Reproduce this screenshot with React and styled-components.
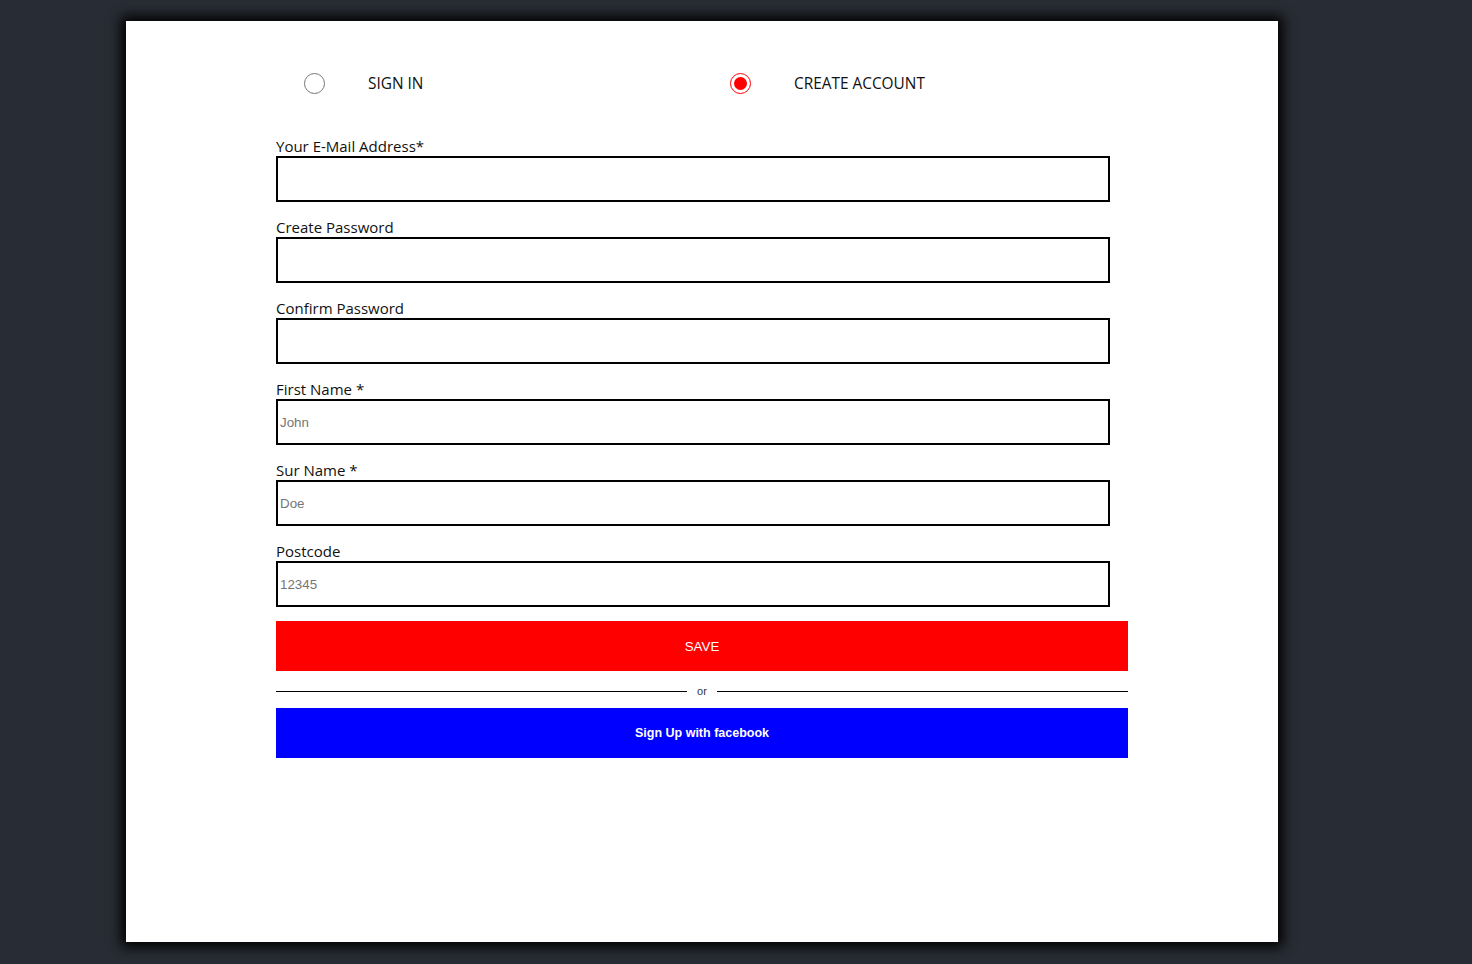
import React from 'react';
import styled, { createGlobalStyle } from 'styled-components';

const GlobalStyle = createGlobalStyle`
  html, body {
    margin: 0;
    padding: 0;
    background-color: #282c34;
  }
  body {
    font-family: "Open Sans", "Noto Sans", sans-serif;
  }
  * {
    box-sizing: border-box;
  }
`;

const Page = styled.div`
  min-height: 964px;
  padding: 21px 0 22px 126px;
`;

const Card = styled.div`
  width: 1152px;
  height: 921px;
  background: #fff;
  box-shadow: 0 0 12px 5px #000;
  padding: 52px 150px 0;
`;

const Form = styled.form`
  width: 852px;
  display: flex;
  flex-direction: column;
`;

const ModeRow = styled.div`
  display: grid;
  grid-template-columns: 1fr 1fr;
  margin-bottom: 43px;
`;

const ModeOption = styled.label`
  display: flex;
  align-items: center;
  gap: 43px;
  padding-left: 28px;
  height: 21px;
  font-size: 15.4px;
  line-height: 21px;
  color: #111;
  cursor: pointer;
`;

const Radio = styled.span`
  position: relative;
  width: 21px;
  height: 21px;
  border-radius: 50%;
  border: ${(p) => (p.$checked ? '1.5px solid #f00' : '1px solid #767676')};
  background: #fff;
  flex-shrink: 0;

  &::after {
    content: '';
    display: ${(p) => (p.$checked ? 'block' : 'none')};
    position: absolute;
    inset: 3px;
    border-radius: 50%;
    background: #f00;
  }
`;

const FieldList = styled.div`
  display: flex;
  flex-direction: column;
  gap: 16px;
  margin-bottom: 14px;
`;

const Field = styled.div`
  display: flex;
  flex-direction: column;
`;

const Label = styled.label`
  font-size: 15px;
  line-height: 19px;
  color: #111;
`;

const Input = styled.input`
  width: 834px;
  height: 46px;
  border: 2px solid #000;
  padding: 0 2px;
  font-family: "Liberation Sans", Arial, sans-serif;
  font-size: 13.33px;
  outline: none;

  &::placeholder {
    color: #757575;
  }
`;

const Button = styled.button`
  width: 100%;
  height: 50px;
  border: none;
  background: ${(p) => p.$bg};
  color: #fff;
  font-family: "Liberation Sans", Arial, sans-serif;
  font-size: ${(p) => (p.$bold ? '12.5px' : '13.33px')};
  font-weight: ${(p) => (p.$bold ? 700 : 400)};
  cursor: pointer;
`;

const Divider = styled.div`
  display: flex;
  align-items: center;
  gap: 10px;
  height: 14px;
  margin: 13px 0 10px;
  font-family: "Liberation Sans", Arial, sans-serif;
  font-size: 11px;
  color: #333;

  &::before,
  &::after {
    content: '';
    flex: 1;
    height: 1px;
    background: #000;
  }
`;

const fields = [
  { id: 'email', label: 'Your E-Mail Address*', type: 'email' },
  { id: 'password', label: 'Create Password', type: 'password' },
  { id: 'confirm', label: 'Confirm Password', type: 'password' },
  { id: 'first', label: 'First Name *', placeholder: 'John' },
  { id: 'sur', label: 'Sur Name *', placeholder: 'Doe' },
  { id: 'postcode', label: 'Postcode', placeholder: '12345' },
];

export default function App() {
  const [mode, setMode] = React.useState('create');

  return (
    <>
      <GlobalStyle />
      <Page>
        <Card>
          <Form onSubmit={(e) => e.preventDefault()}>
            <ModeRow>
              <ModeOption onClick={() => setMode('signin')}>
                <Radio $checked={mode === 'signin'} />
                SIGN IN
              </ModeOption>
              <ModeOption onClick={() => setMode('create')}>
                <Radio $checked={mode === 'create'} />
                CREATE ACCOUNT
              </ModeOption>
            </ModeRow>

            <FieldList>
              {fields.map((f) => (
                <Field key={f.id}>
                  <Label htmlFor={f.id}>{f.label}</Label>
                  <Input id={f.id} type={f.type || 'text'} placeholder={f.placeholder} />
                </Field>
              ))}
            </FieldList>

            <Button type="submit" $bg="#f00">SAVE</Button>
            <Divider>or</Divider>
            <Button type="button" $bg="#00f" $bold>Sign Up with facebook</Button>
          </Form>
        </Card>
      </Page>
    </>
  );
}
